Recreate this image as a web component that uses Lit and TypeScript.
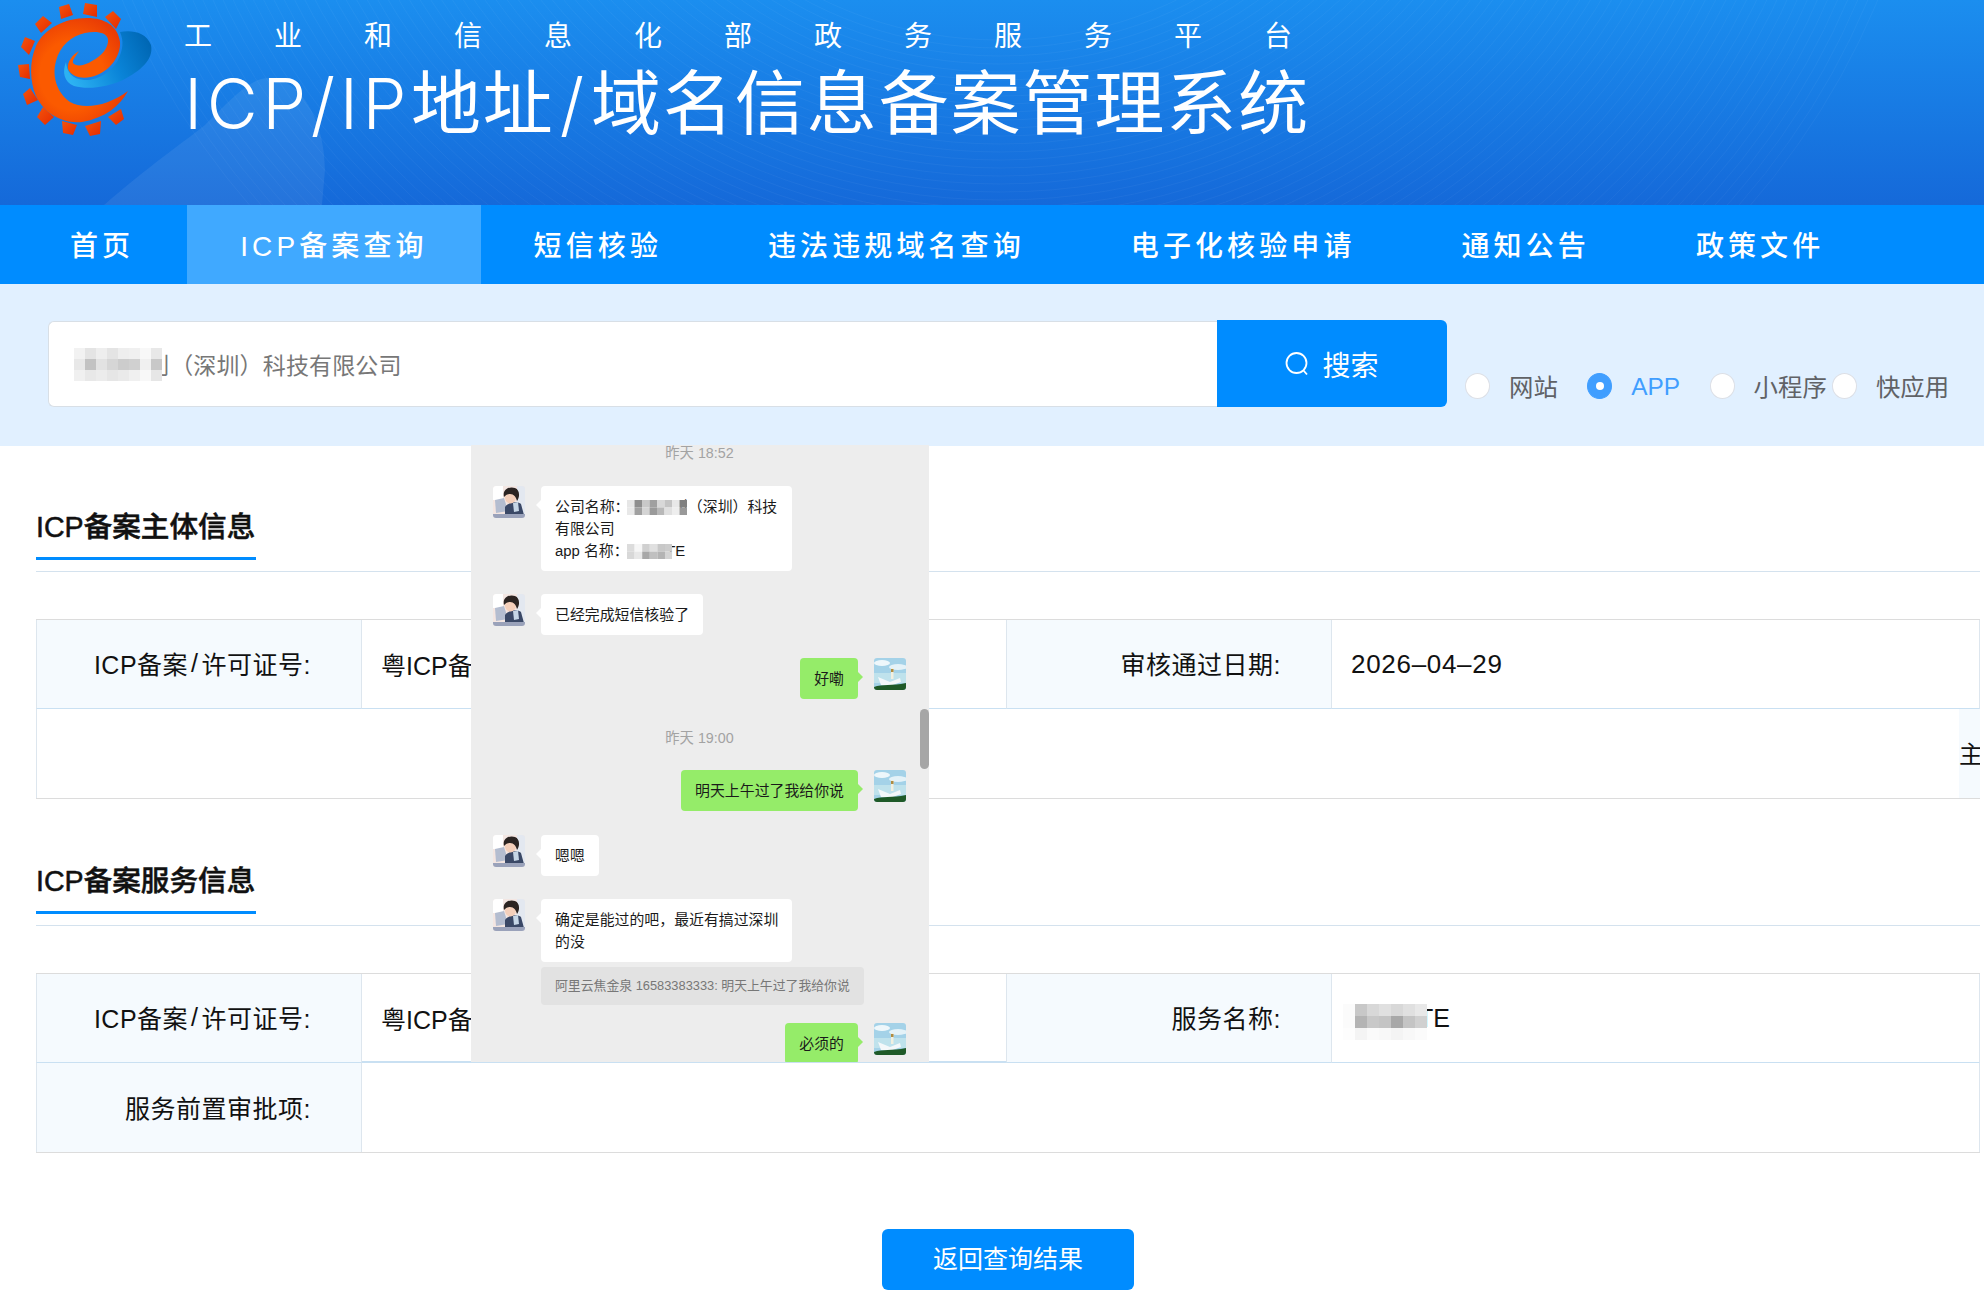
import { LitElement, html, css, svg } from 'lit';
import { customElement } from 'lit/decorators.js';

const NAV = ['首页', 'ICP备案查询', '短信核验', '违法违规域名查询', '电子化核验申请', '通知公告', '政策文件'];
const RADIOS = ['网站', 'APP', '小程序', '快应用'];
const ORG = '工业和信息化部政务服务平台'.split('');

const TEETH = [
  '59,7 69,4 73,15 61,19', '85,3 97,5 97,17 83,14', '113,11 121,19 116,29 105,17',
  '43,16 52,23 41,33 35,24', '25,37 35,41 29,55 21,47', '18,65 29,64 30,79 20,77',
  '30,88 38,100 27,105 23,94', '43,107 54,117 45,125 37,117', '62,121 77,125 73,135 63,133',
  '85,126 101,121 100,134 90,136', '108,117 121,109 124,119 116,125',
];

function mosaic(cell: number, rows: string[][]) {
  const w = rows[0].length * cell;
  const h = rows.length * cell;
  return html`<svg class="mosaic" width=${w} height=${h} viewBox="0 0 ${w} ${h}">
    ${rows.map((r, y) => r.map((c, x) => svg`<rect x=${x * cell} y=${y * cell} width=${cell} height=${cell} fill="#${c}" />`))}
  </svg>`;
}

const INPUT_BLUR = [
  ['f2f2f2', 'e4e4e4', 'eeeeee', 'e4e4e4', 'eeeeee', 'f0f0f0', 'f8f8f8', 'e8e8e8'],
  ['e8e8e8', 'c2c2c2', 'e2e2e2', 'd6d6d6', 'cccccc', 'd0d0d0', 'f0f0f0', 'c8c8c8'],
  ['f0f0f0', 'e8e8e8', 'ececec', 'e6e6e6', 'eaeaea', 'f0f0f0', 'f8f8f8', 'e6e6e6'],
];
const CHAT_BLUR_A = [
  ['e6e6e6', '8e8e8e', 'c8c8c8', 'a0a0a0', 'd8d8d8', 'c4c4c4', 'e8e8e8', '808080'],
  ['e8e8e8', 'a0a0a0', 'd4d4d4', '9a9a9a', 'b8b8b8', 'e0e0e0', 'eeeeee', '999999'],
];
const CHAT_BLUR_B = [
  ['dcdcdc', 'f6f6f6', 'd0d0d0', 'e0e0e0', 'c8c8c8', 'cccccc'],
  ['d8d8d8', 'e8e8e8', 'a8a8a8', 'c0c0c0', 'b4b4b4', 'd4d4d4'],
];
const TABLE_BLUR = [
  ['fbfbfb', 'c8c8c8', 'd8d8d8', 'e0e0e0', 'd8d8d8', 'e0e0e0', 'e8e8e8'],
  ['fbfbfb', 'b4b4b4', 'c8c8c8', 'c4c4c4', 'a8a8a8', 'c4c4c4', 'd0d0d0'],
  ['fdfdfd', 'f4f4f4', 'fafafa', 'f8f8f8', 'f4f4f4', 'f8f8f8', 'fbfbfb'],
];

const logo = html`<svg class="logo" width="180" height="150" viewBox="0 0 180 150">
  <defs>
    <linearGradient id="tooth" x1="0" y1="0" x2="1" y2="1">
      <stop offset="0" stop-color="#f4540c" />
      <stop offset="1" stop-color="#e52b00" />
    </linearGradient>
    <radialGradient id="spiral" cx="0.42" cy="0.55" r="0.6">
      <stop offset="0.55" stop-color="#fb5a00" />
      <stop offset="1" stop-color="#e93c05" />
    </radialGradient>
    <linearGradient id="swirl" x1="0" y1="0.6" x2="1" y2="0.3">
      <stop offset="0" stop-color="#2cb2f2" />
      <stop offset="0.55" stop-color="#0a84d8" />
      <stop offset="1" stop-color="#0067b4" />
    </linearGradient>
  </defs>
  ${TEETH.map((p) => svg`<polygon points=${p} fill="url(#tooth)" />`)}
  <path fill="url(#swirl)" d="M120 32 C130 30 146 31 151 45 C154 60 140 71 123 80 C108 87 88 90 74 86 C64 82 62 72 66 62 C67 72 72 79 84 80 C98 81 112 71 118 60 C123 50 124 41 120 32 Z" />
  <path fill="url(#spiral)" d="M128 91 C120 106 105 118 82 122 C62 124 44 113 36 96 C30 82 29 62 36 46 C44 29 64 18 87 18 C105 18 118 26 120 42 C121 56 110 70 97 75 C85 80 72 78 68 69 C67 62 72 55 79 51 C76 56 72 60 73 63 C76 67 84 66 92 61 C102 56 109 47 108 39 C106 32 96 31 85 33 C71 36 60 46 56 61 C52 75 56 92 70 102 C84 110 108 106 128 91 Z" />
</svg>`;

const arcs = Array.from({ length: 62 }, (_, i) => 300 + i * 8);

const headerBg = html`<svg class="header-bg" width="1984" height="205" viewBox="0 0 1984 205">
  <path fill="#fff" opacity="0.07" d="M104 205 C150 165 180 145 205 125 C230 100 250 78 268 78 C300 78 325 120 325 170 L322 205 Z" />
  ${arcs.map((r) => svg`<ellipse cx="1000" cy="-260" rx=${r * 1.18} ry=${r} fill="none" stroke="#fff" stroke-opacity="0.04" />`)}
</svg>`;

const avatarThem = html`<svg class="avatar" viewBox="0 0 32 32">
  <rect width="32" height="32" fill="#f3e6e2" />
  <rect x="0" y="0" width="10" height="14" fill="#fff" />
  <rect x="24" y="0" width="8" height="32" fill="#e3e8f0" />
  <path fill="#b4bdd0" d="M2 14 L11 12 L15 25 L3 27 Z" />
  <path fill="#3a4866" d="M12 21 C15 16 25 15 28 18 L31 29 L12 29 Z" />
  <path fill="#c6d6e6" d="M20 17 L25 16 L26 25 L21 26 Z" />
  <ellipse cx="17.5" cy="11.5" rx="5.5" ry="6" fill="#f4cfba" />
  <path fill="#2b2422" d="M11 11 C9 3 17 0 22 2 C27 4 27 11 24 15 C23 11 21 8 17 8 C14 8 13 9 11 11 Z" />
  <rect x="0" y="28" width="32" height="4" fill="#9aa2ba" />
</svg>`;

const avatarMe = html`<svg class="avatar" viewBox="0 0 32 32">
  <rect width="32" height="32" fill="#a4d2e8" />
  <ellipse cx="8" cy="5" rx="8" ry="3" fill="#eef7fb" />
  <ellipse cx="24" cy="9" rx="9" ry="3" fill="#e4f2f8" />
  <rect y="15" width="32" height="10" fill="#bfe2ec" />
  <rect x="17" y="10" width="2.5" height="11" fill="#f2f0e0" />
  <rect x="17" y="11" width="2.5" height="3" fill="#b08c40" />
  <path fill="#f4f8fa" d="M4 19 L16 24 L26 20 L27 24 L16 28 L7 27 Z" />
  <path fill="#1f5a28" d="M0 29 C8 26 18 28 32 25 L32 32 L0 32 Z" />
</svg>`;

@customElement('app-root')
export class AppRoot extends LitElement {
  static styles = css`
    :host {
      display: block;
      position: relative;
      width: 1984px;
      height: 1290px;
      overflow: hidden;
      background: #fff;
      font-family: 'Liberation Sans', 'Noto Sans CJK SC', sans-serif;
      color: #111;
    }

    .header {
      position: relative;
      height: 205px;
      display: flex;
      overflow: hidden;
      background: linear-gradient(180deg, #1b8eef 0%, #1569d9 100%);
      color: #fff;
    }
    .header-bg {
      position: absolute;
      left: 0;
      top: 0;
    }
    .logo {
      position: relative;
      flex: none;
      margin-right: 4px;
    }
    .heading {
      position: relative;
      padding-top: 19px;
    }
    .org {
      display: flex;
      height: 36px;
      line-height: 36px;
      font-size: 28px;
    }
    .org span {
      width: 90px;
    }
    .title {
      margin-top: 9px;
      height: 80px;
      line-height: 80px;
      font-size: 70px;
      letter-spacing: 1.9px;
      white-space: nowrap;
    }
    .title .latin {
      font-family: 'Inter', 'Liberation Sans', sans-serif;
      font-weight: 300;
      letter-spacing: 4.5px;
    }
    .title .slash {
      font-family: 'Inter', 'Liberation Sans', sans-serif;
      font-weight: 300;
      margin: 0 5px;
    }

    .nav {
      display: flex;
      height: 79px;
      background: #008cff;
      color: #fff;
    }
    .nav-item {
      padding: 4px 53px 0;
      line-height: 75px;
      font-size: 28px;
      font-weight: 500;
      letter-spacing: 4.1px;
      white-space: nowrap;
    }
    .nav-item:first-child {
      padding-left: 70px;
    }
    .nav-item.active {
      background: #40a9ff;
    }

    .search-band {
      height: 162px;
      box-sizing: border-box;
      padding: 36px 0 0 48px;
      display: flex;
      align-items: flex-start;
      background: #e1f0ff;
    }
    .input {
      width: 1169px;
      height: 86px;
      margin-top: 1px;
      box-sizing: border-box;
      padding-left: 25px;
      display: flex;
      align-items: center;
      background: #fff;
      border: 1px solid #d8dfe6;
      border-right: none;
      border-radius: 6px 0 0 6px;
      font-size: 23px;
      letter-spacing: 0.15px;
      color: #777;
      white-space: nowrap;
    }
    .input .mosaic {
      position: relative;
    }
    .input .rest {
      margin-left: -15px;
    }
    .search-btn {
      width: 230px;
      height: 87px;
      display: flex;
      align-items: center;
      justify-content: center;
      gap: 13px;
      background: #008cff;
      border-radius: 0 6px 6px 0;
      color: #fff;
      font-size: 28px;
    }
    .radios {
      display: flex;
      margin: 53px 0 0 18px;
    }
    .radio {
      width: 122.3px;
      height: 26px;
      display: flex;
      align-items: center;
      gap: 19px;
      font-size: 24.4px;
      color: #606266;
      white-space: nowrap;
    }
    .radio .text {
      margin-top: -2px;
    }
    .radio.on {
      color: #409eff;
    }
    .radio.on .text {
      margin-top: 2px;
    }
    .dot {
      flex: none;
      width: 25px;
      height: 26px;
      box-sizing: border-box;
      display: flex;
      align-items: center;
      justify-content: center;
      background: #fff;
      border: 1px solid #dcdfe6;
      border-radius: 50%;
    }
    .radio.on .dot {
      background: #409eff;
      border-color: #409eff;
    }
    .radio.on .dot::after {
      content: '';
      width: 8px;
      height: 8px;
      background: #fff;
      border-radius: 50%;
    }

    .main {
      padding: 60px 4px 0 36px;
    }
    .section-title {
      padding-bottom: 11px;
      border-bottom: 1px solid #d4e2ee;
    }
    .section-title span {
      display: inline-block;
      width: 220px;
      height: 40px;
      padding-bottom: 11px;
      line-height: 43px;
      font-size: 28.6px;
      font-weight: 500;
      -webkit-text-stroke: 0.5px #111;
      white-space: nowrap;
      border-bottom: 3px solid #008cff;
    }
    .table {
      margin: 47px 0 61px;
      display: grid;
      grid-template-columns: 326px 645px 325px 648px;
      grid-auto-rows: 89px;
      border-top: 1px solid #dcdcdc;
      border-bottom: 1px solid #dcdcdc;
    }
    .table.last {
      margin-bottom: 76px;
    }
    .cell {
      display: flex;
      align-items: center;
      box-sizing: border-box;
      border-bottom: 1px solid #c9e0f2;
      border-right: 1px solid #dde6ee;
      font-size: 25px;
      letter-spacing: 0.5px;
      white-space: nowrap;
      overflow: hidden;
    }
    .cell:first-child,
    .cell.row-start {
      border-left: 1px solid #dde6ee;
    }
    .cell.lab {
      justify-content: flex-end;
      padding: 0 50px 2px 0;
      background: #f5fafe;
    }
    .cell .slash {
      margin: 0 3px;
    }
    .cell.val {
      padding-left: 19px;
      letter-spacing: 0;
    }
    .cell.end {
      border-bottom: none;
    }
    .cell.thick {
      border-bottom-width: 2px;
    }
    .date {
      font-size: 26px;
      letter-spacing: 0.7px;
    }
    .full {
      grid-column: 1 / -1;
      display: flex;
    }
    .full .blank {
      flex: 1;
      border-left: 1px solid #dde6ee;
    }
    .full .clipped {
      flex: none;
      width: 21px;
      padding-bottom: 2px;
      box-sizing: border-box;
      display: flex;
      align-items: center;
      overflow: hidden;
      background: #f5fafe;
      font-size: 24px;
    }
    .span-3 {
      grid-column: 2 / -1;
    }
    .service {
      display: flex;
      align-items: center;
    }
    .service .mosaic {
      position: relative;
      top: 4px;
      z-index: 1;
      margin-left: -8px;
    }
    .service span {
      margin-left: -9px;
    }

    .back-row {
      display: flex;
      justify-content: center;
    }
    .back {
      width: 252px;
      height: 61px;
      line-height: 61px;
      text-align: center;
      background: #008cff;
      border-radius: 6px;
      color: #fff;
      font-size: 25px;
      white-space: nowrap;
    }

    /* pasted chat screenshot lying over the tables */
    .chat {
      position: absolute;
      left: 471px;
      top: 445px;
      width: 458px;
      height: 617px;
      box-sizing: border-box;
      padding: 0 23px 0 22px;
      display: flex;
      flex-direction: column;
      gap: 23px;
      overflow: hidden;
      background: #ededed;
      font-size: 14.9px;
      line-height: 22px;
      color: #1a1a1a;
    }
    .time {
      height: 20px;
      line-height: 20px;
      text-align: center;
      font-size: 14.3px;
      color: #a3a3a3;
      flex: none;
    }
    .time.first {
      margin-top: -2px;
    }
    .time.second {
      margin: 6px 0 -1px;
    }
    .msg {
      flex: none;
      display: flex;
      align-items: flex-start;
      gap: 16px;
    }
    .msg.me {
      justify-content: flex-end;
    }
    .msg.push {
      margin-top: 1px;
    }
    .msg.cut {
      margin-top: -5px;
    }
    .avatar {
      flex: none;
      width: 32px;
      height: 32px;
      border-radius: 3px;
    }
    .col {
      display: flex;
      flex-direction: column;
      align-items: flex-start;
      gap: 5px;
    }
    .bubble {
      position: relative;
      padding: 10px 14px 9px;
      background: #fff;
      border-radius: 4px;
      white-space: nowrap;
    }
    .bubble.wide {
      width: 251px;
      box-sizing: border-box;
    }
    .bubble .mosaic {
      position: relative;
      z-index: 1;
      vertical-align: -3px;
      margin-left: -2px;
    }
    .bubble .tail {
      margin-left: -14.5px;
    }
    .bubble .tail-te {
      margin-left: -6px;
    }
    .bubble::before {
      content: '';
      position: absolute;
      left: -5px;
      top: 14px;
      border: 5px solid transparent;
      border-left: none;
      border-right-color: #fff;
    }
    .me .bubble {
      background: #95ec69;
    }
    .me .bubble::before {
      left: auto;
      right: -5px;
      border: 5px solid transparent;
      border-right: none;
      border-left-color: #95ec69;
    }
    .quote {
      width: 323px;
      height: 38px;
      box-sizing: border-box;
      padding-left: 14px;
      line-height: 38px;
      background: #e2e2e2;
      border-radius: 4px;
      font-size: 12.85px;
      color: #777;
      white-space: nowrap;
    }
    .scroll {
      position: absolute;
      right: 0;
      top: 264px;
      width: 9px;
      height: 60px;
      background: #a6a6a6;
      border-radius: 5px;
    }
  `;

  render() {
    return html`
      <div class="header">
        ${headerBg}
        ${logo}
        <div class="heading">
          <div class="org">${ORG.map((c) => html`<span>${c}</span>`)}</div>
          <div class="title"><span class="latin">ICP/IP</span>地址<span class="slash">/</span>域名信息备案管理系统</div>
        </div>
      </div>
      <div class="nav">
        ${NAV.map((n, i) => html`<div class="nav-item ${i === 1 ? 'active' : ''}">${n}</div>`)}
      </div>
      <div class="search-band">
        <div class="input">${mosaic(11, INPUT_BLUR)}<span class="rest">刂（深圳）科技有限公司</span></div>
        <div class="search-btn">
          <svg width="24" height="24" viewBox="0 0 24 24" fill="none" stroke="#fff" stroke-width="1.8">
            <circle cx="11.5" cy="11" r="10" />
            <path d="M18.5 18.5 L22 22.5" />
          </svg>
          搜索
        </div>
        <div class="radios">
          ${RADIOS.map((r, i) => html`
            <div class="radio ${i === 1 ? 'on' : ''}"><span class="dot"></span><span class="text">${r}</span></div>
          `)}
        </div>
      </div>
      <div class="main">
        <div class="section-title"><span>ICP备案主体信息</span></div>
        <div class="table">
          <div class="cell lab">ICP备案<span class="slash">/</span>许可证号:</div>
          <div class="cell val">粤ICP备</div>
          <div class="cell lab">审核通过日期:</div>
          <div class="cell val"><span class="date">2026–04–29</span></div>
          <div class="full">
            <div class="blank"></div>
            <div class="clipped">主</div>
          </div>
        </div>
        <div class="section-title"><span>ICP备案服务信息</span></div>
        <div class="table last">
          <div class="cell lab">ICP备案<span class="slash">/</span>许可证号:</div>
          <div class="cell val thick">粤ICP备</div>
          <div class="cell lab">服务名称:</div>
          <div class="cell val"><div class="service">${mosaic(12, TABLE_BLUR)}<span>TE</span></div></div>
          <div class="cell lab row-start end">服务前置审批项:</div>
          <div class="cell val end span-3"></div>
        </div>
        <div class="back-row"><div class="back">返回查询结果</div></div>
      </div>
      <div class="chat">
        <div class="time first">昨天 18:52</div>
        <div class="msg">
          ${avatarThem}
          <div class="bubble wide">公司名称：${mosaic(7.5, CHAT_BLUR_A)}<span class="tail">刂（深圳）科技</span><br />有限公司<br />app 名称：${mosaic(7.6, CHAT_BLUR_B)}<span class="tail-te">TE</span></div>
        </div>
        <div class="msg">
          ${avatarThem}
          <div class="bubble">已经完成短信核验了</div>
        </div>
        <div class="msg me">
          <div class="bubble">好嘞</div>
          ${avatarMe}
        </div>
        <div class="time second">昨天 19:00</div>
        <div class="msg me">
          <div class="bubble">明天上午过了我给你说</div>
          ${avatarMe}
        </div>
        <div class="msg push">
          ${avatarThem}
          <div class="bubble">嗯嗯</div>
        </div>
        <div class="msg">
          ${avatarThem}
          <div class="col">
            <div class="bubble wide">确定是能过的吧，最近有搞过深圳<br />的没</div>
            <div class="quote">阿里云焦金泉 16583383333: 明天上午过了我给你说</div>
          </div>
        </div>
        <div class="msg me cut">
          <div class="bubble">必须的</div>
          ${avatarMe}
        </div>
        <div class="scroll"></div>
      </div>
    `;
  }
}
